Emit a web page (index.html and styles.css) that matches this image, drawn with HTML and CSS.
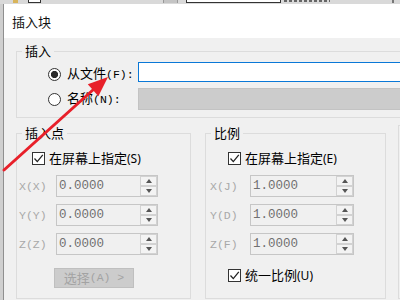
FILE: index.html
```html
<!DOCTYPE html>
<html lang="zh-CN">
<head>
<meta charset="utf-8">
<title>插入块</title>
<link rel="stylesheet" href="styles.css">
</head>
<body>
<div class="screen">
  <div class="toolbar">
    <i class="tb-icon"></i><i class="tb-box"></i><i class="tb-sep"></i><i class="tb-field"></i><i class="tb-text"></i><i class="tb-end"></i>
  </div>
  <div class="main">
    <div class="side"></div>
    <div class="dialog">
      <div class="titlebar">插入块</div>
      <div class="body">
        <fieldset class="group g-insert">
          <legend>插入</legend>
          <div class="src-row r1">
            <label class="opt"><span class="radio on"></span><span>从文件<span class="m">(F):</span></span></label>
            <div class="text-input"></div>
          </div>
          <div class="src-row r2">
            <label class="opt"><span class="radio"></span><span>名称<span class="m">(N):</span></span></label>
            <div class="combo"></div>
          </div>
        </fieldset>
        <div class="groups">
          <fieldset class="group g-point">
            <legend>插入点</legend>
            <label class="cb-row"><span class="check"><svg viewBox="0 0 11 11" width="11" height="11"><path d="M1.5 5.5 L4.3 8.6 L9.8 1.8" fill="none" stroke="#222" stroke-width="1.3"/></svg></span><span>在屏幕上指定<span class="p">(S)</span></span></label>
            <div class="spins">
              <div class="spin-row"><span class="axis">X(X)</span><div class="spin"><span class="val">0.0000</span><span class="btns"><span class="up"></span><span class="dn"></span></span></div></div>
              <div class="spin-row"><span class="axis">Y(Y)</span><div class="spin"><span class="val">0.0000</span><span class="btns"><span class="up"></span><span class="dn"></span></span></div></div>
              <div class="spin-row"><span class="axis">Z(Z)</span><div class="spin"><span class="val">0.0000</span><span class="btns"><span class="up"></span><span class="dn"></span></span></div></div>
            </div>
            <div class="pick-btn">选择<span class="m">(A) &gt;</span></div>
          </fieldset>
          <fieldset class="group g-scale">
            <legend>比例</legend>
            <label class="cb-row"><span class="check"><svg viewBox="0 0 11 11" width="11" height="11"><path d="M1.5 5.5 L4.3 8.6 L9.8 1.8" fill="none" stroke="#222" stroke-width="1.3"/></svg></span><span>在屏幕上指定<span class="p">(E)</span></span></label>
            <div class="spins">
              <div class="spin-row"><span class="axis">X(J)</span><div class="spin"><span class="val">1.0000</span><span class="btns"><span class="up"></span><span class="dn"></span></span></div></div>
              <div class="spin-row"><span class="axis">Y(D)</span><div class="spin"><span class="val">1.0000</span><span class="btns"><span class="up"></span><span class="dn"></span></span></div></div>
              <div class="spin-row"><span class="axis">Z(F)</span><div class="spin"><span class="val">1.0000</span><span class="btns"><span class="up"></span><span class="dn"></span></span></div></div>
            </div>
            <label class="cb-row uni"><span class="check"><svg viewBox="0 0 11 11" width="11" height="11"><path d="M1.5 5.5 L4.3 8.6 L9.8 1.8" fill="none" stroke="#222" stroke-width="1.3"/></svg></span><span>统一比例<span class="p">(U)</span></span></label>
          </fieldset>
          <fieldset class="group g-rot"></fieldset>
        </div>
      </div>
    </div>
  </div>
  <svg class="arrow" viewBox="0 0 400 300" width="400" height="300">
    <line x1="4" y1="170" x2="94" y2="89" stroke="#e8202a" stroke-width="3" stroke-linecap="round"/>
    <polygon points="108,77 87.8,84.3 98.4,96.3" fill="#e8202a"/>
  </svg>
</div>
</body>
</html>
```
FILE: styles.css
```css
* { box-sizing: border-box; }
html, body { margin: 0; padding: 0; }
body {
  width: 400px;
  height: 300px;
  overflow: hidden;
  background: #f0f0f0;
  font-family: "Noto Sans CJK SC", "Noto Sans", sans-serif;
  font-size: 13px;
  color: #000;
}
.screen {
  position: relative;
  width: 400px;
  height: 300px;
  overflow: hidden;
  display: flex;
  flex-direction: column;
}
.toolbar {
  height: 4px;
  flex: none;
  background: #d9d9d9;
  display: flex;
  align-items: flex-start;
  overflow: hidden;
}
.toolbar i { display: block; height: 3px; flex: none; }
.tb-icon { margin-left: 13px; width: 5px; background: #d8b45a; }
.tb-box { margin-left: 10px; width: 13px; border: 1px solid #333; border-top: 0; background: #fff; }
.tb-sep { margin-left: 122px; width: 15px; background: #c4c4c4; border-left: 1px solid #999; border-right: 1px solid #999; }
.tb-field { margin-left: 8px; width: 95px; border: 1px solid #333; border-top: 0; background: #fff; }
.toolbar .tb-text { margin-left: 3px; width: 46px; height: 2px; background: repeating-linear-gradient(90deg, #666 0 3px, transparent 3px 5px); }
.tb-end { margin-left: auto; margin-right: 6px; width: 2px; background: #777; }

.main { flex: 1; display: flex; min-height: 0; }
.side { width: 3px; flex: none; background: #cfcfcf; }
.dialog {
  flex: 1;
  min-width: 0;
  border-left: 1px solid #8f8f8f;
  display: flex;
  flex-direction: column;
  overflow: hidden;
  background: #f0f0f0;
}
.titlebar {
  height: 34px;
  flex: none;
  background: #fff;
  padding: 2px 0 0 8px;
  line-height: 32px;
  font-size: 13px;
  color: #111;
}
.body { width: 520px; padding: 5px 12px 0 12px; }

.group {
  margin: 0;
  padding: 0;
  border: 1px solid #dcdcdc;
  min-width: 0;
}
.group legend {
  margin-left: 5px;
  padding: 0 3px;
  line-height: 16px;
  font-size: 13px;
}
.m { font-family: "Liberation Mono", monospace; font-size: 11.5px; }
.p { font-family: "Noto Sans", sans-serif; font-size: 12px; }

/* insert group */
.g-insert { padding-bottom: 7px; }
.src-row {
  display: grid;
  grid-template-columns: 121px 1fr;
  align-items: center;
  height: 20px;
  margin-top: 2px;
}
.src-row.r2 { height: 22px; margin-top: 7px; }
.opt {
  display: flex;
  align-items: center;
  gap: 6px;
  padding-left: 31px;
  white-space: nowrap;
  line-height: 16px;
}
.r1 .opt { padding-top: 4px; }
.radio {
  width: 13px;
  height: 13px;
  flex: none;
  border-radius: 50%;
  border: 1px solid #333;
  background: #fff;
}
.radio.on { background: radial-gradient(circle, #2a2a2a 0 3.3px, #fff 3.9px); }
.text-input { height: 20px; border: 1px solid #0a78d7; background: #fff; }
.combo { height: 22px; background: #cccccc; border: 1px solid #c3c3c3; }

/* lower groups */
.groups { display: flex; gap: 14px; margin-top: 7px; align-items: stretch; }
.g-point { width: 175px; flex: none; padding-bottom: 10px; }
.g-scale { width: 181px; flex: none; padding-bottom: 10px; }
.g-rot { width: 120px; flex: none; margin-left: -2px; }

.cb-row {
  display: flex;
  align-items: center;
  gap: 4px;
  height: 16px;
  margin-top: 9px;
  padding-left: 15px;
  white-space: nowrap;
  line-height: 16px;
}
.g-scale .cb-row { padding-left: 22px; }
.g-scale .cb-row.uni { margin-top: 12px; }
.check {
  width: 13px;
  height: 13px;
  flex: none;
  border: 1px solid #333;
  background: #fff;
  display: flex;
}
.spins { display: flex; flex-direction: column; gap: 7px; margin-top: 9px; }
.spin-row { display: flex; align-items: center; height: 22px; }
.axis {
  width: 39px;
  padding-left: 2px;
  font-family: "Liberation Mono", monospace;
  font-size: 11.5px;
  color: #a8a8a8;
}
.g-scale .axis { width: 44px; padding-left: 4px; }
.spin {
  width: 102px;
  height: 22px;
  border: 1px solid #c6c6c6;
  background: #f0f0f0;
  display: flex;
  align-items: center;
  justify-content: space-between;
}
.g-scale .spin { width: 104px; }
.val {
  font-family: "Liberation Mono", monospace;
  font-size: 12.5px;
  color: #707070;
  padding-left: 2px;
}
.btns { display: flex; flex-direction: column; width: 17px; height: 20px; }
.btns span {
  flex: 1;
  border: 1px solid #d2d2d2;
  background: #f3f3f3;
  display: flex;
  align-items: center;
  justify-content: center;
}
.btns .up::before {
  content: "";
  border-left: 3px solid transparent;
  border-right: 3px solid transparent;
  border-bottom: 4px solid #555;
}
.btns .dn::before {
  content: "";
  border-left: 3px solid transparent;
  border-right: 3px solid transparent;
  border-top: 4px solid #555;
}
.pick-btn {
  width: 80px;
  height: 20px;
  margin: 13px 0 0 37px;
  background: #cccccc;
  border: 1px solid #bfbfbf;
  color: #a3a3a3;
  display: flex;
  align-items: center;
  justify-content: center;
  line-height: 16px;
  white-space: nowrap;
}

.arrow { position: absolute; left: 0; top: 0; pointer-events: none; }
```
